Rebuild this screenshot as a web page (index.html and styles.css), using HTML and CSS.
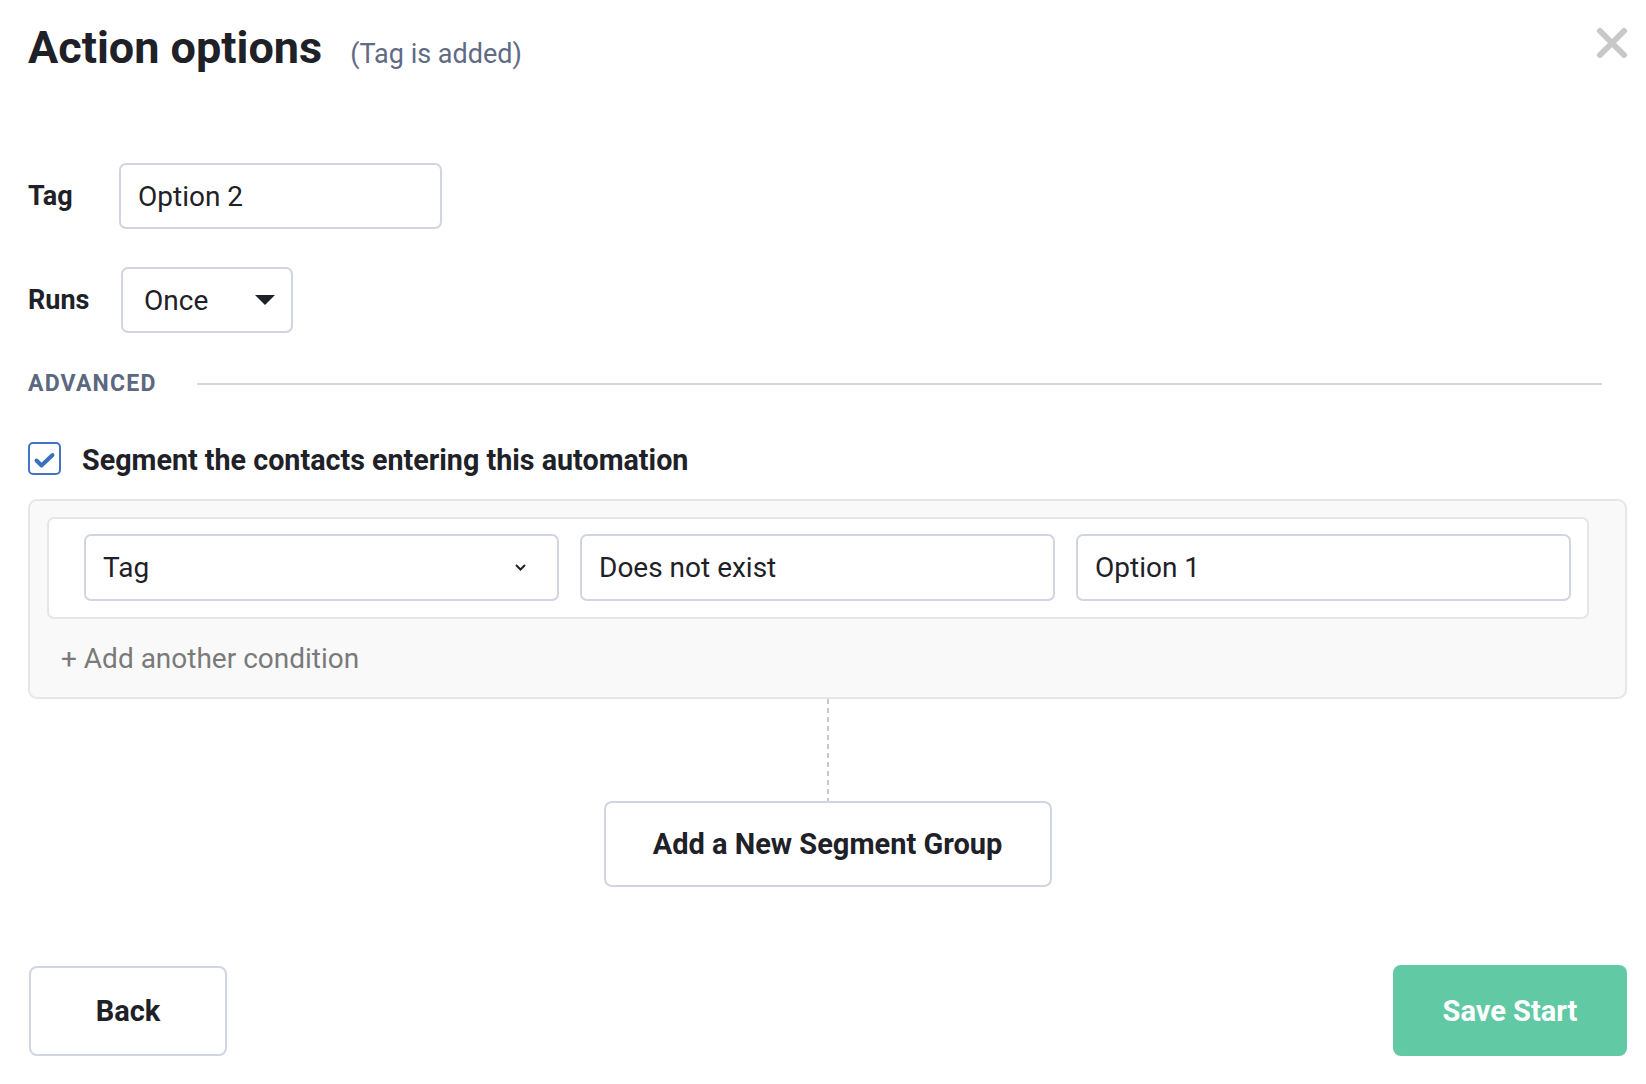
FILE: index.html
```html
<!DOCTYPE html>
<html lang="en">
<head>
  <meta charset="UTF-8" />
  <title>Action options</title>
  <link rel="stylesheet" href="styles.css">
</head>
<body>

  <!-- Header -->
  <div class="header">
    <h1>Action options</h1>
    <span class="subtitle">(Tag is added)</span>
    <button class="close" aria-label="Close">
      <svg width="32" height="32" viewBox="0 0 32 32">
        <path d="M4 4 L28 28 M28 4 L4 28" stroke="#c8c8c8" stroke-width="6" stroke-linecap="round" fill="none"/>
      </svg>
    </button>
  </div>

  <!-- Basic options -->
  <div class="field-row tag-row">
    <div class="field-label">Tag</div>
    <div class="input tag-input">Option 2</div>
  </div>

  <div class="field-row runs-row">
    <div class="field-label">Runs</div>
    <div class="input runs-select">
      <span>Once</span>
      <svg class="caret" width="20" height="10" viewBox="0 0 20 10"><path d="M0 0 H20 L10 10 Z" fill="#1f2128"/></svg>
    </div>
  </div>

  <!-- Advanced -->
  <div class="section-head">
    <span>ADVANCED</span>
    <div class="rule"></div>
  </div>

  <div class="check-row">
    <svg class="checkbox" width="33" height="33" viewBox="0 0 33 33">
      <rect x="1" y="1" width="31" height="31" rx="4" fill="#fff" stroke="#4472c4" stroke-width="2"/>
      <path d="M8.5 18.5 L13.5 23.5 L24.5 13" stroke="#3d6fc0" stroke-width="4" stroke-linecap="round" stroke-linejoin="round" fill="none"/>
    </svg>
    <span class="check-text">Segment the contacts entering this automation</span>
  </div>

  <div class="segment-panel">
    <div class="condition">
      <div class="input cond-select">
        <span>Tag</span>
        <svg width="11" height="7" viewBox="0 0 11 7"><path d="M1 1 L5.5 5.5 L10 1" stroke="#1f2128" stroke-width="2" fill="none"/></svg>
      </div>
      <div class="input">Does not exist</div>
      <div class="input">Option 1</div>
    </div>
    <div class="add-condition">+ Add another condition</div>
  </div>

  <div class="connector"></div>
  <button class="btn btn-group">Add a New Segment Group</button>

  <!-- Footer -->
  <div class="footer">
    <button class="btn btn-back">Back</button>
    <button class="btn btn-save">Save Start</button>
  </div>

</body>
</html>
```

FILE: styles.css
```css
body {
  font-family: Roboto, "Liberation Sans", sans-serif;
  color: #1f2128;
  background: #fff;
  margin: 0;
  padding: 0 19px 0 28px;
}

/* Header */
.header {
  display: flex;
  align-items: baseline;
  padding-top: 20px;
}

.header h1 {
  margin: 0;
  font-size: 45px;
  line-height: 56px;
  font-weight: 700;
}

.subtitle {
  margin-left: 28px;
  font-size: 27px;
  color: #5f6a85;
}

.close {
  margin-left: auto;
  margin-top: 7px;
  margin-right: -1px;
  align-self: flex-start;
  background: none;
  border: none;
  padding: 0;
  width: 32px;
  height: 32px;
  cursor: pointer;
}

.close svg {
  display: block;
}

/* Fields */
.field-row {
  display: flex;
  align-items: center;
}

.tag-row {
  margin-top: 87px;
}

.runs-row {
  margin-top: 38px;
}

.field-label {
  width: 91px;
  font-size: 27px;
  font-weight: 700;
}

.input {
  box-sizing: border-box;
  display: flex;
  align-items: center;
  height: 66px;
  border: 2px solid #d1d5e1;
  border-radius: 7px;
  background: #fff;
  font-size: 28px;
  padding-left: 17px;
}

.tag-input {
  width: 323px;
}

.runs-select {
  width: 172px;
  margin-left: 2px;
  padding-left: 21px;
  padding-right: 16px;
  justify-content: space-between;
}

/* Advanced */
.section-head {
  display: flex;
  align-items: center;
  margin-top: 39px;
  font-size: 23px;
  line-height: 24px;
  font-weight: 700;
  letter-spacing: 1.2px;
  color: #5c6781;
}

.section-head .rule {
  flex: 1;
  height: 2px;
  background: #d4d7e3;
  margin-left: 40px;
  margin-right: 25px;
}

.check-row {
  display: flex;
  align-items: flex-start;
  margin-top: 46px;
}

.checkbox {
  display: block;
  flex-shrink: 0;
}

.check-text {
  margin-left: 21px;
  margin-top: 2px;
  font-size: 28.7px;
  line-height: 33px;
  font-weight: 700;
}

.segment-panel {
  margin-top: 22px;
  background: #f9f9f9;
  border: 2px solid #e6e6e6;
  border-radius: 9px;
  padding: 16px 36px 23px 17px;
}

.condition {
  display: grid;
  grid-template-columns: 475px 475px 1fr;
  gap: 21px;
  background: #fff;
  border: 2px solid #e6e6e6;
  border-radius: 7px;
  padding: 15px 16px 16px 35px;
}

.condition .input {
  height: 67px;
}

.cond-select {
  justify-content: space-between;
  padding-right: 31px;
}

.cond-select svg {
  display: block;
}

.add-condition {
  margin-top: 25px;
  padding-left: 14px;
  font-size: 28px;
  line-height: 30px;
  color: #7a7a7a;
}

.connector {
  width: 2px;
  height: 102px;
  margin: 0 auto;
  background: repeating-linear-gradient(to bottom, #c9c9c9 0 5px, transparent 5px 9px);
}

/* Buttons */
.btn {
  box-sizing: border-box;
  font-family: inherit;
  font-size: 29px;
  font-weight: 700;
  color: #1f2128;
  background: #fff;
  border: 2px solid #d1d5e1;
  border-radius: 8px;
  cursor: pointer;
}

.btn-group {
  display: block;
  width: 448px;
  height: 86px;
  margin: 0 auto;
}

.footer {
  display: flex;
  justify-content: space-between;
  align-items: center;
  margin-top: 78px;
}

.btn-back {
  width: 198px;
  height: 90px;
  margin-left: 1px;
}

.btn-save {
  width: 234px;
  height: 91px;
  border: none;
  background: #62c9a5;
  color: #fff;
}
```
